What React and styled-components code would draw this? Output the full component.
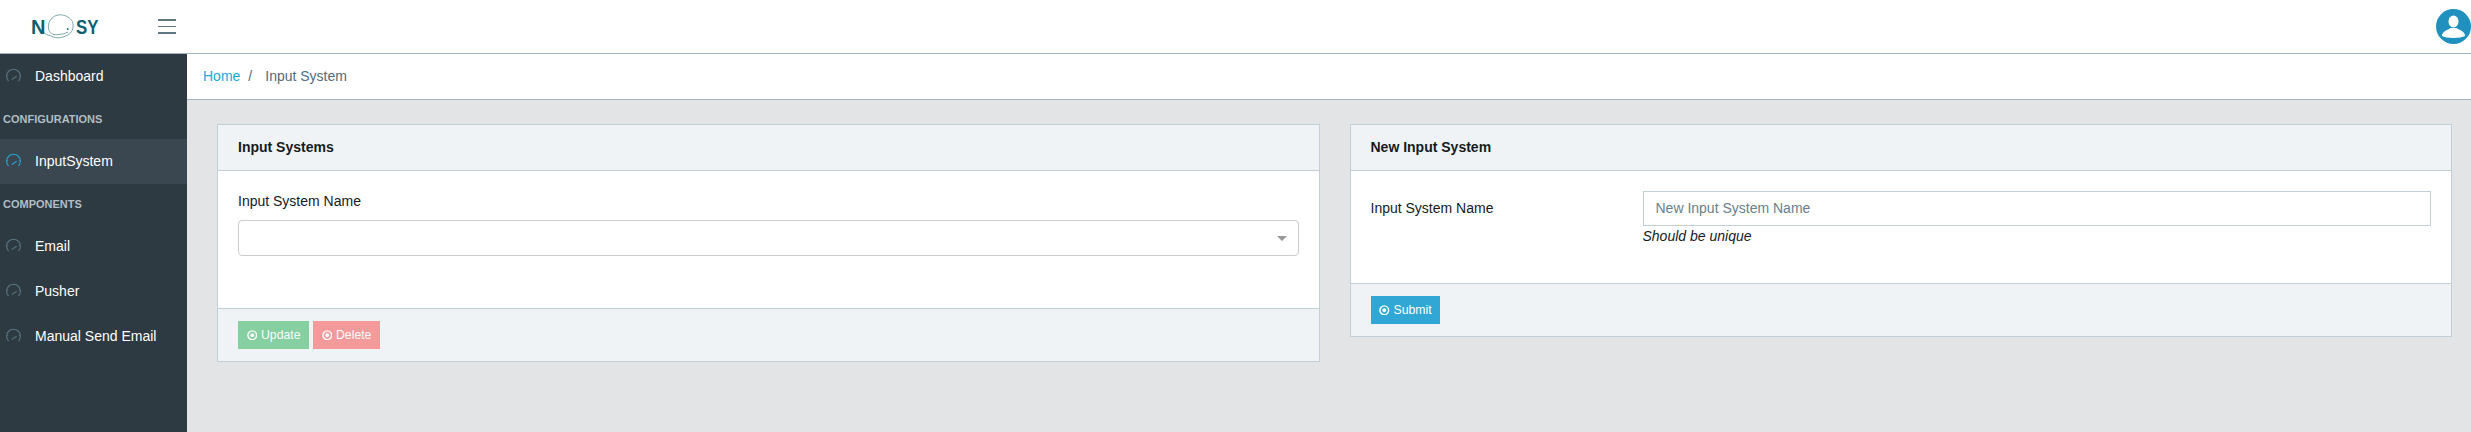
import styled, { createGlobalStyle } from "styled-components";

const GlobalStyle = createGlobalStyle`
  html, body {
    margin: 0;
    padding: 0;
    height: 100%;
    overflow: hidden;
  }
  body {
    font-family: "Liberation Sans", Arial, sans-serif;
    font-size: 14px;
    line-height: 21px;
    color: #151b1e;
    background: #e3e4e6;
  }
  * {
    box-sizing: border-box;
  }
`;

const Page = styled.div`
  display: flex;
  flex-direction: column;
  height: 432px;
`;

const Header = styled.header`
  display: flex;
  align-items: center;
  justify-content: space-between;
  height: 54px;
  flex: none;
  background: #fff;
  border-bottom: 1px solid #a4b7c1;
`;

const HeaderLeft = styled.div`
  display: flex;
  align-items: center;
`;

const Logo = styled.div`
  display: flex;
  align-items: center;
  width: 158px;
  height: 53px;
  padding-left: 31px;
  font-size: 20px;
  font-weight: 700;
  color: #0e5f6e;
`;

const LogoLetters = styled.span`
  display: inline-block;
  line-height: 20px;
  margin-top: 1px;
  transform: scaleX(${(p) => p.$squeeze || 1});
  transform-origin: left center;
`;

const Swirl = styled.svg`
  flex: none;
  width: 31px;
  height: 28px;
  overflow: visible;
  margin-top: 1px;
`;

const Burger = styled.div`
  display: flex;
  flex-direction: column;
  gap: 5px;
  width: 18px;

  span {
    display: block;
    height: 1.5px;
    background: #5f7580;
  }
`;

const Avatar = styled.svg`
  display: block;
  width: 35px;
  height: 35px;
  margin-top: -1px;
  flex: none;
`;

const Body = styled.div`
  display: flex;
  flex: 1;
  min-height: 0;
`;

const Sidebar = styled.nav`
  width: 187px;
  flex: none;
  background: #2e3a41;
`;

const NavItem = styled.div`
  display: flex;
  align-items: center;
  height: 45px;
  padding-left: 6px;
  color: #fff;
  background: ${(p) => (p.$active ? "#3a4750" : "transparent")};
`;

const NavIcon = styled.svg`
  width: 15px;
  height: 15px;
  margin-right: 14px;
  margin-top: -3px;
  flex: none;
  color: ${(p) => (p.$active ? "#2a9fcc" : "#56707e")};
`;

const NavTitle = styled.div`
  display: flex;
  align-items: center;
  height: 40px;
  padding-left: 3px;
  font-size: 11px;
  font-weight: 700;
  color: #b0bec5;
  text-transform: uppercase;
`;

const Main = styled.main`
  flex: 1;
  min-width: 0;
`;

const Breadcrumb = styled.div`
  display: flex;
  align-items: center;
  height: 46px;
  padding-left: 16px;
  background: #fff;
  border-bottom: 1px solid #a4b7c1;
  color: #536c79;
`;

const Crumb = styled.span`
  color: #20a8d8;
`;

const Sep = styled.span`
  padding: 0 13px 0 8px;
`;

const Content = styled.div`
  display: grid;
  grid-template-columns: 1fr 1fr;
  gap: 30px;
  align-items: start;
  padding: 24px 19px 0 30px;
`;

const Card = styled.section`
  background: #fff;
  border: 1px solid #c2cfd6;
`;

const CardHeader = styled.div`
  display: flex;
  align-items: center;
  height: 46px;
  padding: 0 20px;
  background: #f0f3f5;
  border-bottom: 1px solid #c2cfd6;
  font-weight: 700;
`;

const CardBody = styled.div`
  padding: 20px;
  height: ${(p) => p.$height}px;
`;

const CardFooter = styled.div`
  display: flex;
  gap: 4px;
  padding: 12px 20px;
  background: #f0f3f5;
  border-top: 1px solid #c2cfd6;
`;

const StackLabel = styled.div`
  margin-bottom: 8px;
`;

const SelectBox = styled.div`
  display: flex;
  align-items: center;
  justify-content: flex-end;
  height: 36px;
  padding-right: 11px;
  background: #fff;
  border: 1px solid #ccc;
  border-radius: 4px;
`;

const Caret = styled.span`
  width: 0;
  height: 0;
  border-left: 5px solid transparent;
  border-right: 5px solid transparent;
  border-top: 5px solid #999;
`;

const FormRow = styled.div`
  display: grid;
  grid-template-columns: 272px 1fr;
`;

const RowLabel = styled.label`
  padding-top: 7px;
`;

const TextInput = styled.input`
  display: block;
  width: 100%;
  height: 35px;
  padding: 0 12px 1px;
  font: inherit;
  color: #151b1e;
  background: #fff;
  border: 1px solid #c2cfd6;
  border-radius: 0;
  outline: none;

  &::placeholder {
    color: #68808e;
    opacity: 1;
  }
`;

const Hint = styled.em`
  display: block;
  line-height: 21px;
`;

const Button = styled.button`
  display: inline-flex;
  align-items: center;
  gap: 4px;
  height: 28px;
  padding: 0 8.5px;
  font-family: inherit;
  font-size: 12.25px;
  color: #fff;
  background: ${(p) => p.$color};
  opacity: ${(p) => (p.$disabled ? 0.65 : 1)};
  border: 0;
  border-radius: 0;
`;

const DotCircle = () => (
  <svg width="10.500" height="10.500" viewBox="0 0 12 12">
    <circle cx="6" cy="6" r="5" fill="none" stroke="currentColor" strokeWidth="1.700" />
    <circle cx="6" cy="6" r="2.200" fill="currentColor" />
  </svg>
);

const Gauge = ({ active }) => (
  <NavIcon $active={active} viewBox="0 0 15 15" fill="none" stroke="currentColor" strokeWidth="1.200">
    <path d="M2.600 13A6.900 6.900 0 1 1 12.400 13" />
    <path d="M5.700 11.500 10.700 8.300" />
    <path d="M7.500 1V2.200M1 7.500H2.200M14 7.500H12.800" strokeWidth="0.800" />
  </NavIcon>
);

const NavLink = ({ active, children }) => (
  <NavItem $active={active}>
    <Gauge active={active} />
    {children}
  </NavItem>
);

const App = () => {
  return (
    <Page>
      <GlobalStyle />
      <Header>
        <HeaderLeft>
          <Logo>
            <LogoLetters>N</LogoLetters>
            <Swirl viewBox="0 0 31 28" fill="none">
              <path
                d="M-2 19C1 21.500 3 22.500 5 22.500C10 25.500 15 25 18 24C24 22.500 28 18.500 28 14C28 10 28 9 26.700 7.500C24 3.500 19 1.800 15 1.800C11 1.800 7 4 5 7.500C3 11 3 15 4 17.500C6 21.500 9 22 13 21.500C17 21.500 20 20.500 23 19"
                stroke="#7fa8ad"
                strokeWidth="1"
              />
              <circle cx="22.700" cy="16" r="0.900" fill="#0e5f6e" />
            </Swirl>
            <LogoLetters $squeeze={0.84}>SY</LogoLetters>
          </Logo>
          <Burger>
            <span />
            <span />
            <span />
          </Burger>
        </HeaderLeft>
        <Avatar viewBox="0 0 35 35">
          <circle cx="17.500" cy="17.500" r="17.500" fill="#2090bf" />
          <ellipse cx="17.500" cy="12.500" rx="5" ry="6" fill="#fff" />
          <path d="M6 27C6 22 12 21 14.500 19H20.500C23 21 29 22 29 27C25 29.500 10 29.500 6 27Z" fill="#fff" />
        </Avatar>
      </Header>
      <Body>
        <Sidebar>
          <NavLink>Dashboard</NavLink>
          <NavTitle>Configurations</NavTitle>
          <NavLink active>InputSystem</NavLink>
          <NavTitle>Components</NavTitle>
          <NavLink>Email</NavLink>
          <NavLink>Pusher</NavLink>
          <NavLink>Manual Send Email</NavLink>
        </Sidebar>
        <Main>
          <Breadcrumb>
            <Crumb>Home</Crumb>
            <Sep>/</Sep>
            <span>Input System</span>
          </Breadcrumb>
          <Content>
            <Card>
              <CardHeader>Input Systems</CardHeader>
              <CardBody $height={137}>
                <StackLabel>Input System Name</StackLabel>
                <SelectBox>
                  <Caret />
                </SelectBox>
              </CardBody>
              <CardFooter>
                <Button $color="#4dbd74" $disabled>
                  <DotCircle /> Update
                </Button>
                <Button $color="#f86c6b" $disabled>
                  <DotCircle /> Delete
                </Button>
              </CardFooter>
            </Card>
            <Card>
              <CardHeader>New Input System</CardHeader>
              <CardBody $height={112}>
                <FormRow>
                  <RowLabel>Input System Name</RowLabel>
                  <div>
                    <TextInput placeholder="New Input System Name" />
                    <Hint>Should be unique</Hint>
                  </div>
                </FormRow>
              </CardBody>
              <CardFooter>
                <Button $color="#31a7d5">
                  <DotCircle /> Submit
                </Button>
              </CardFooter>
            </Card>
          </Content>
        </Main>
      </Body>
    </Page>
  );
};

export default App;
